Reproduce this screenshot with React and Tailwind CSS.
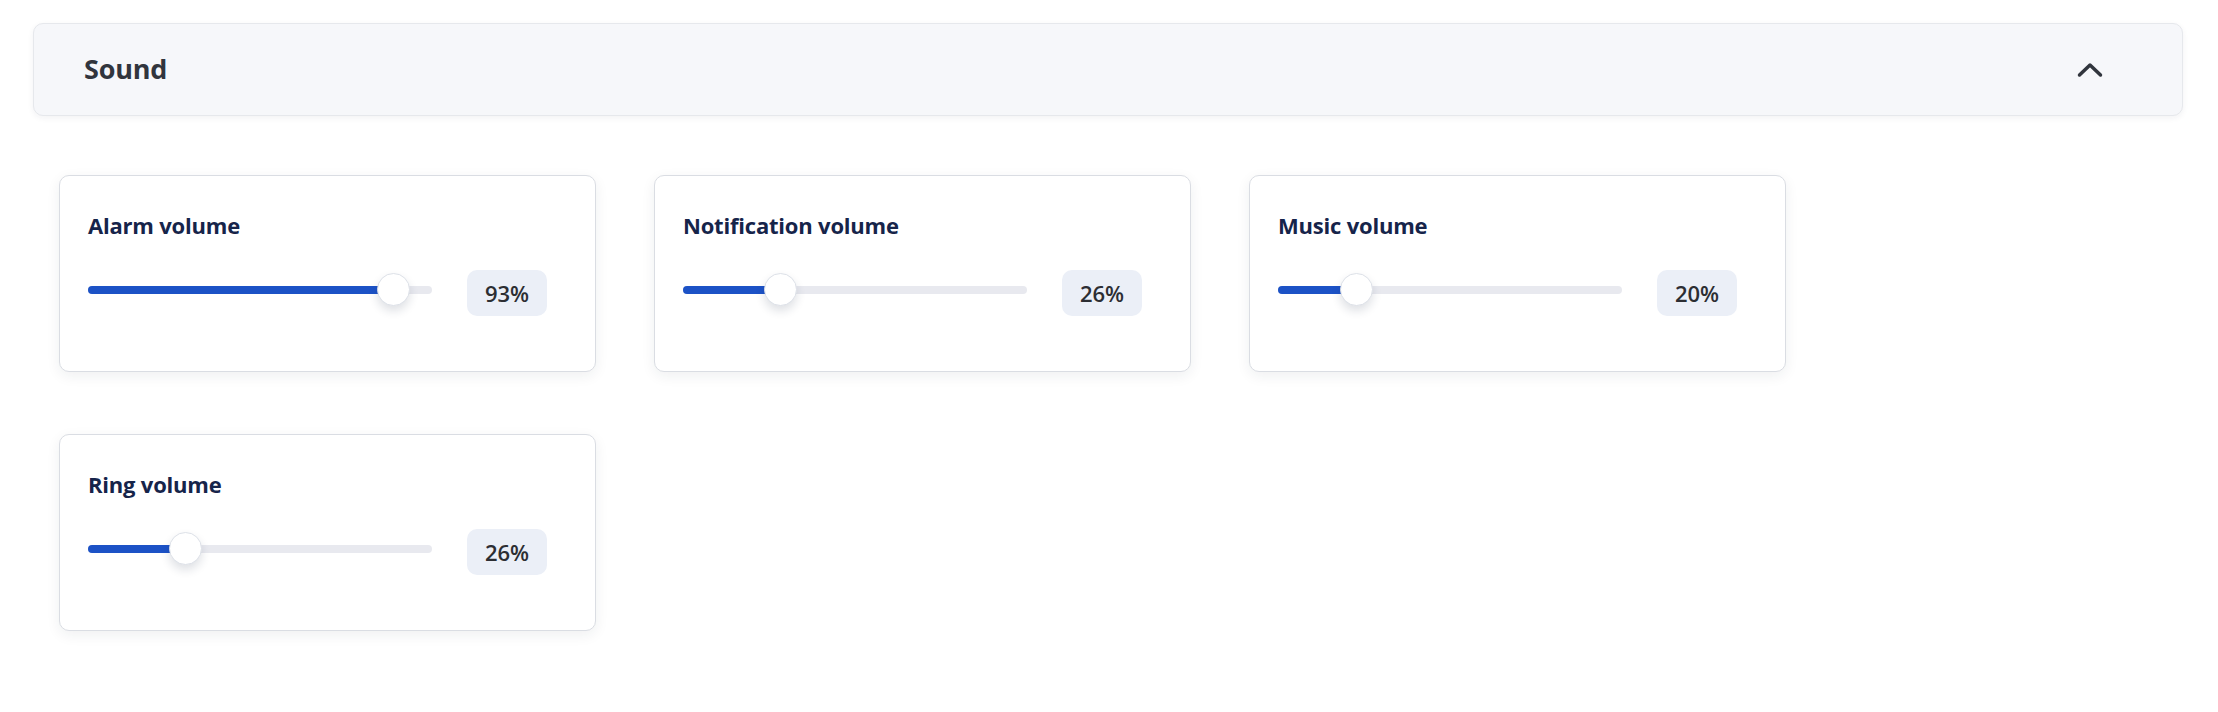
import { useState } from 'react';

const sliders = [
  { id: 'alarm', label: 'Alarm volume', value: 93 },
  { id: 'notification', label: 'Notification volume', value: 26 },
  { id: 'music', label: 'Music volume', value: 20 },
  { id: 'ring', label: 'Ring volume', value: 26 },
];

const TRACK = 344;
const THUMB = 33;

function VolumeCard({ label, value }) {
  // thumb stays inside the track, fill runs to its centre
  const center = (value / 100) * (TRACK - THUMB) + THUMB / 2;

  return (
    <div className="w-[537px] h-[197px] rounded-[10px] border border-[#dadde3] bg-white px-[28px] pt-[34px] shadow-[0_4px_14px_rgba(30,40,60,0.07)]">
      <h3 className="text-[22px] leading-[30px] font-bold tracking-[-0.2px] text-[#16244a]">{label}</h3>
      <div className="mt-[30px] flex items-start">
        <div className="relative mt-[3px] h-[33px] w-[344px]">
          <div className="absolute left-0 right-0 top-[12.5px] h-[8px] rounded-full bg-[#e8e9ef]" />
          <div
            className="absolute left-0 top-[12.5px] h-[8px] rounded-full bg-[#1c52c6]"
            style={{ width: center }}
          />
          <div
            className="absolute top-0 h-[33px] w-[33px] rounded-full border border-[#dde1e8] bg-white shadow-[0_5px_10px_rgba(30,40,70,0.14)]"
            style={{ left: center - THUMB / 2 }}
          />
        </div>
        <div className="ml-[35px] flex h-[46px] w-[80px] items-center justify-center rounded-[10px] bg-[#ebeff7] text-[22px] font-semibold text-[#2c2e33]">
          {value}%
        </div>
      </div>
    </div>
  );
}

function App() {
  const [open, setOpen] = useState(true);

  return (
    <div className="min-h-screen bg-white px-[33px] pt-[23px]" style={{ fontFamily: '"Open Sans", "Noto Sans", sans-serif' }}>
      {/* Section header */}
      <button
        onClick={() => setOpen(!open)}
        className="flex h-[93px] w-[2150px] items-center justify-between rounded-[10px] border border-[#e6e8ec] bg-[#f6f7fa] pl-[50px] pr-[79px] shadow-[0_2px_6px_rgba(30,40,60,0.06)]"
      >
        <span className="text-[27px] font-bold tracking-[-0.2px] text-[#31353d]">Sound</span>
        <svg width="26" height="16" viewBox="0 0 26 16" fill="none">
          <path
            d={open ? 'M2.5 13 L13 3 L23.5 13' : 'M2.5 3 L13 13 L23.5 3'}
            stroke="#31353d"
            strokeWidth="3.5"
            strokeLinecap="round"
            strokeLinejoin="round"
          />
        </svg>
      </button>

      {open && (
        <div className="grid grid-cols-[repeat(3,537px)] gap-x-[58px] gap-y-[62px] pl-[26px] pt-[59px]">
          {sliders.map((s) => (
            <VolumeCard key={s.id} label={s.label} value={s.value} />
          ))}
        </div>
      )}
    </div>
  );
}

export default App;
